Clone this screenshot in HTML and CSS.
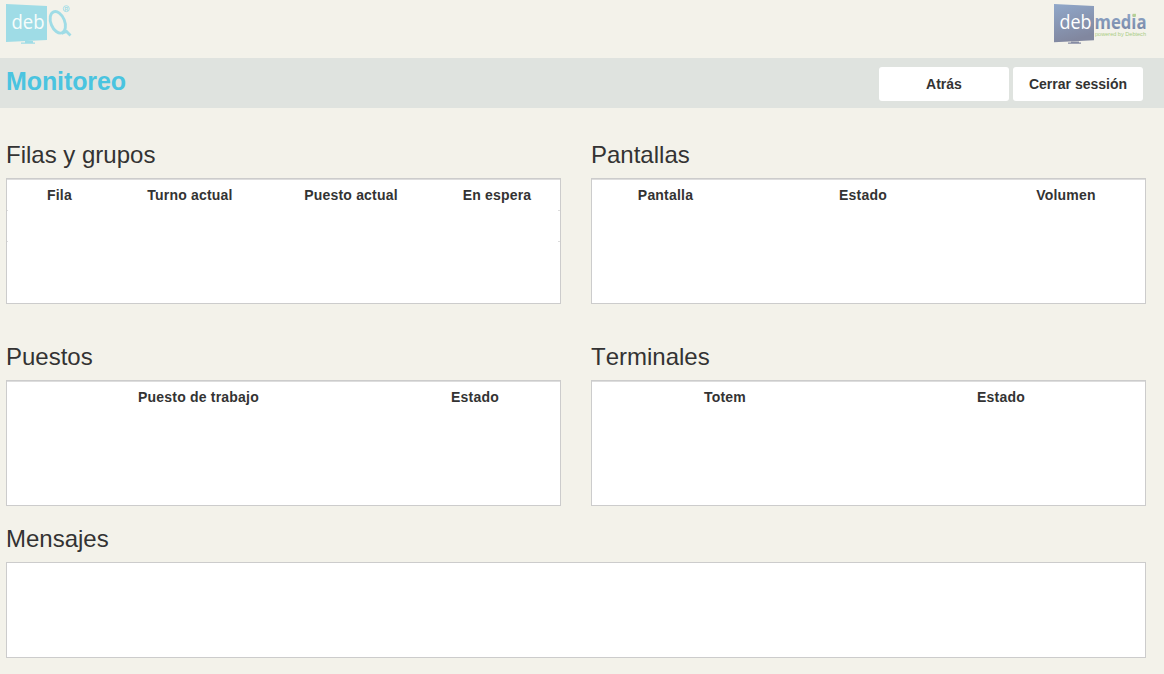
FILE: index.html
```html
<!DOCTYPE html>
<html lang="es">
<head>
<meta charset="utf-8">
<title>Monitoreo</title>
<link rel="stylesheet" href="styles.css">
</head>
<body>
<header class="brand">
  <svg class="logo" width="72" height="46" viewBox="0 0 72 46" role="img" aria-label="debQ">
    <path fill="#9fdce6" d="M0 4 41 6V40L0 42Z"/>
    <path fill="#9fdce6" d="M19 41h8v1.500h2v1.300H15v-1.300h4z"/>
    <text class="logo-word" x="5.500" y="29.300" textLength="33" lengthAdjust="spacingAndGlyphs" fill="#f7fdfb">deb</text>
    <ellipse cx="51.800" cy="22.300" rx="6.900" ry="11.300" transform="rotate(-22 51.800 22.300)" fill="none" stroke="#9fdce6" stroke-width="2.900"/>
    <path d="M55.500 33.500 60.500 31.500 64.500 35.500" fill="none" stroke="#9fdce6" stroke-width="2.800"/>
    <circle cx="60.300" cy="8.700" r="3" fill="none" stroke="#9fdce6" stroke-width=".9"/>
    <text class="logo-mark" x="58.500" y="10.700" fill="#9fdce6">R</text>
  </svg>
  <svg class="logo" width="96" height="46" viewBox="0 0 96 46" role="img" aria-label="debmedia">
    <defs>
      <linearGradient id="screen" x1="0" y1="0" x2=".3" y2="1">
        <stop offset="0" stop-color="#90a8ca"/>
        <stop offset="1" stop-color="#81879f"/>
      </linearGradient>
      <linearGradient id="word" x1="0" y1="0" x2="0" y2="1">
        <stop offset=".2" stop-color="#8ca4c6"/>
        <stop offset="1" stop-color="#74809e"/>
      </linearGradient>
    </defs>
    <path fill="url(#screen)" d="M0 4 40 6V40.300L0 42.300Z"/>
    <path fill="#858ba3" d="M17 41.500h8v1h2v1.300H14v-1.300h3z"/>
    <text class="logo-word" x="5.500" y="29" textLength="32" lengthAdjust="spacingAndGlyphs" fill="#fff">deb</text>
    <text class="logo-media" x="40.500" y="29" textLength="52" lengthAdjust="spacingAndGlyphs" fill="url(#word)">media</text>
    <path fill="#b5d293" d="M78.700 13.800h3.200v2.900h-3.200z"/>
    <text class="logo-tag" x="41" y="36" textLength="51" lengthAdjust="spacingAndGlyphs" fill="#a9cc84">powered by Debtech</text>
  </svg>
</header>
<div class="toolbar">
  <h1 class="title">Monitoreo</h1>
  <div class="actions">
    <button class="btn">Atrás</button>
    <button class="btn">Cerrar sessión</button>
  </div>
</div>
<main class="content">
  <section>
    <h2 class="heading">Filas y grupos</h2>
    <div class="panel">
      <div class="columns queues"><span>Fila</span><span>Turno actual</span><span>Puesto actual</span><span>En espera</span></div>
      <div class="empty-row"></div>
      <div class="empty-row"></div>
    </div>
  </section>
  <section>
    <h2 class="heading">Pantallas</h2>
    <div class="panel">
      <div class="columns screens"><span>Pantalla</span><span>Estado</span><span>Volumen</span></div>
    </div>
  </section>
  <section>
    <h2 class="heading">Puestos</h2>
    <div class="panel">
      <div class="columns desks"><span>Puesto de trabajo</span><span>Estado</span></div>
    </div>
  </section>
  <section>
    <h2 class="heading">Terminales</h2>
    <div class="panel">
      <div class="columns kiosks"><span>Totem</span><span>Estado</span></div>
    </div>
  </section>
  <section class="messages">
    <h2 class="heading">Mensajes</h2>
    <div class="panel message-box"></div>
  </section>
</main>
</body>
</html>
```
FILE: styles.css
```css
* { box-sizing: border-box; }
body {
  margin: 0;
  height: 674px;
  overflow: hidden;
  background: #f3f2ea;
  color: #333;
  font-family: "Liberation Sans", Arial, sans-serif;
  font-size: 14px;
}
.brand {
  height: 58px;
  display: flex;
  justify-content: space-between;
  padding: 0 14px 0 6px;
}
.logo { display: block; overflow: visible; }
.logo-word { font: 20px "Open Sans", sans-serif; }
.logo-media { font: bold 19px "Open Sans", sans-serif; }
.logo-tag { font: 5.6px "Liberation Sans", Arial, sans-serif; }
.logo-mark { font: bold 5px "Liberation Sans", Arial, sans-serif; }
.toolbar {
  height: 50px;
  display: flex;
  justify-content: space-between;
  padding: 9px 21px 0 6px;
  background: #dfe3df;
}
.title {
  margin: -1px 0 0;
  color: #4ac4e0;
  font-size: 25px;
  line-height: 30px;
  letter-spacing: -.1px;
}
.actions { display: flex; gap: 4px; }
.btn {
  width: 130px;
  height: 34px;
  padding: 0;
  border: 0;
  border-radius: 3px;
  background: #fff;
  color: #333;
  font: bold 14px "Liberation Sans", Arial, sans-serif;
}
.content {
  display: grid;
  grid-template-columns: 555px 555px;
  column-gap: 30px;
  grid-template-rows: 202px 202px auto;
  padding: 32px 18px 0 6px;
}
.heading {
  margin: 0 0 8px;
  font-size: 24px;
  font-weight: 400;
  line-height: 30px;
  font-kerning: none;
}
.panel {
  height: 126px;
  border: 1px solid #ccc;
  background: #fff;
}
.columns {
  display: grid;
  height: 32px;
  border-top: 1px solid #ddd;
  padding-top: 6px;
  text-align: center;
  font-weight: 700;
  line-height: 18px;
  letter-spacing: .2px;
}
.queues { grid-template-columns: 105px 156px 166px 126px; }
.screens { grid-template-columns: 147px 248px 158px; }
.desks { grid-template-columns: 383px 170px; }
.kiosks { grid-template-columns: 266px 286px; }
.empty-row {
  height: 31px;
  margin-top: -1px;
  background:
    linear-gradient(#ddd, #ddd) left top / 1px 1px no-repeat,
    linear-gradient(#ddd, #ddd) right top / 2px 1px no-repeat;
}
.empty-row + .empty-row { margin-top: 0; }
.messages { grid-column: 1 / -1; margin-top: -20px; }
.message-box { height: 96px; }
```
